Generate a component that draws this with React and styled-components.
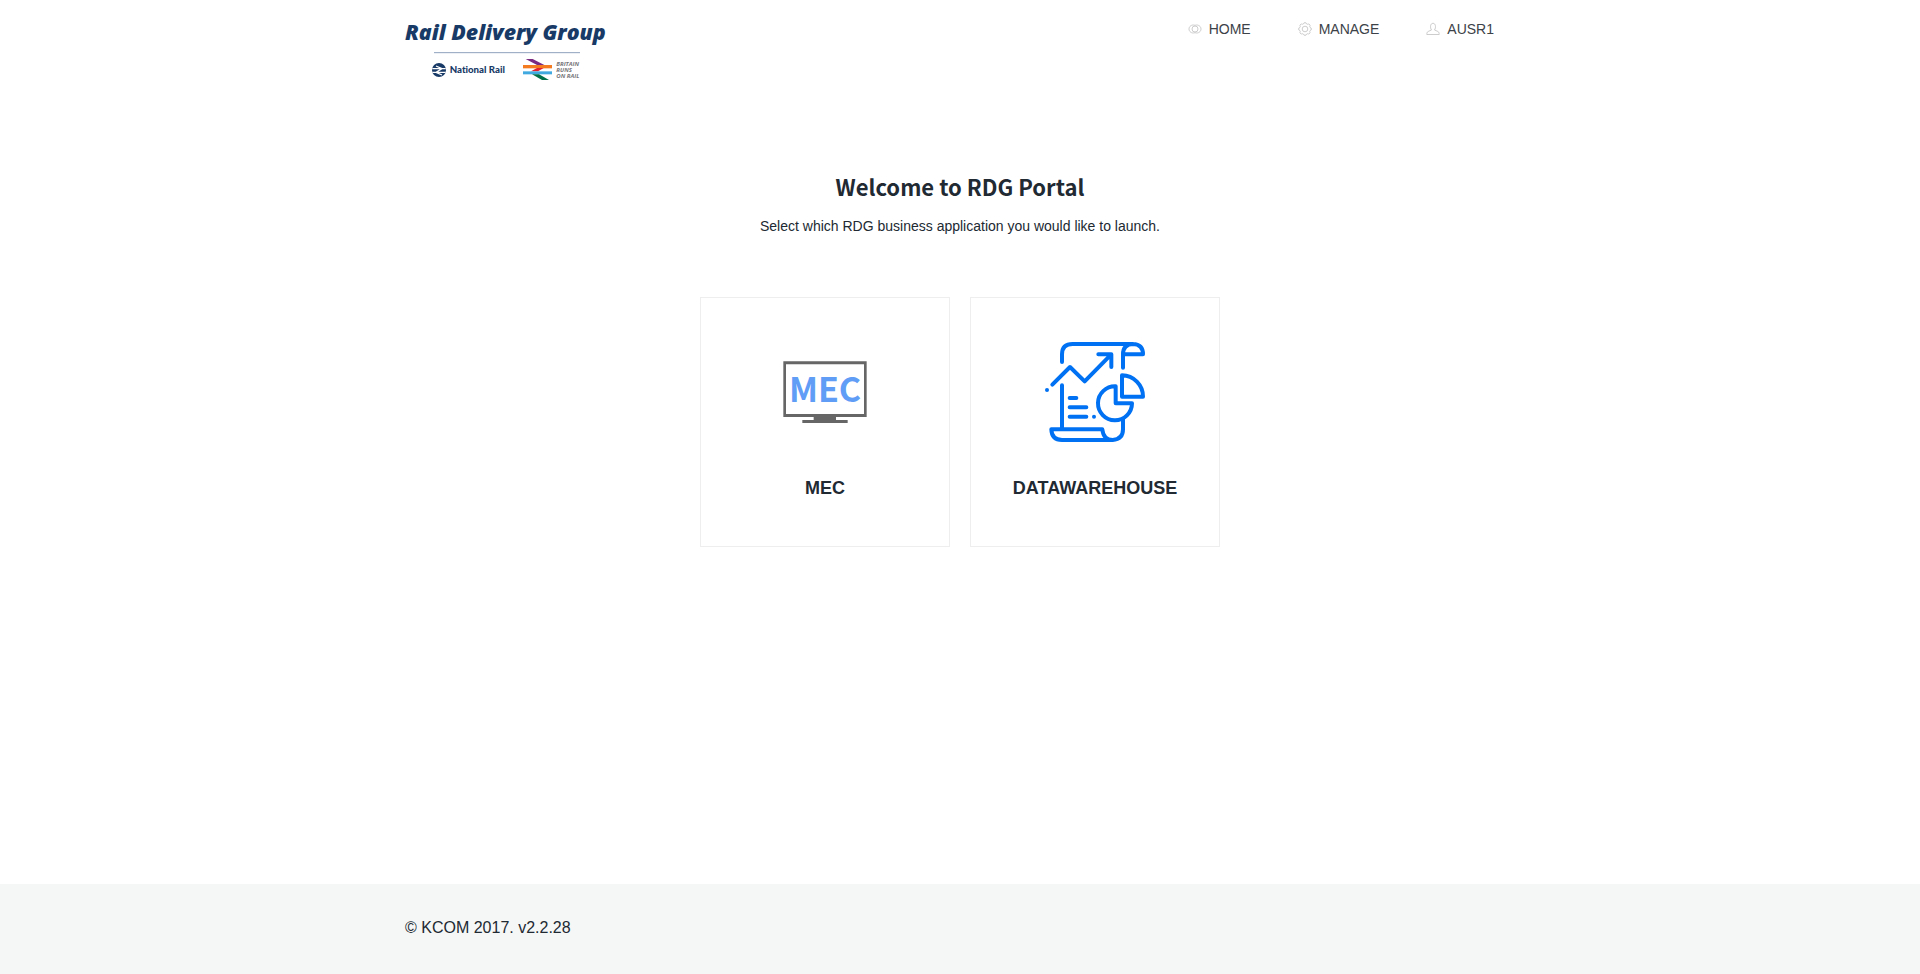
import React from 'react';
import styled, { createGlobalStyle } from 'styled-components';

const GlobalStyle = createGlobalStyle`
  *, *::before, *::after { box-sizing: border-box; }
  body {
    margin: 0;
    background: #fff;
    color: #212932;
    font-family: Arial, "Liberation Sans", sans-serif;
    font-size: 14px;
    line-height: 20px;
  }
`;

const Page = styled.div`
  display: flex;
  flex-direction: column;
  min-height: 100vh;
`;

const Container = styled.div`
  width: 100%;
  max-width: 1140px;
  margin: 0 auto;
  padding: 0 15px;
`;

const HeaderBar = styled(Container).attrs({ as: 'header' })`
  display: flex;
  justify-content: space-between;
  align-items: flex-start;
  padding-top: 19px;
`;

const LogoLink = styled.a`
  display: block;
  height: 64px;
`;

const LogoDrawing = styled.svg`
  display: block;
  overflow: visible;
`;

const NavList = styled.nav`
  display: flex;
  flex-wrap: wrap;
  gap: 47px;
  padding-right: 21px;
`;

const NavLink = styled.a`
  display: flex;
  align-items: center;
  gap: 7px;
  color: #3c4248;
  text-decoration: none;
  text-transform: uppercase;
`;

const NavIcon = styled.svg`
  width: 14px;
  height: 14px;
  fill: none;
  stroke: #c0c0c0;
  stroke-width: 0.8;
`;

const Main = styled.main`
  display: flex;
  flex-direction: column;
  align-items: center;
  flex: 1;
  padding: 87px 15px 40px;
  text-align: center;
`;

const Heading = styled.h1`
  margin: 0;
  font-family: "Noto Sans CJK SC", sans-serif;
  font-size: 22px;
  font-weight: 700;
  line-height: 32px;
`;

const Intro = styled.p`
  margin: 14px 0 0;
`;

const CardList = styled.div`
  display: flex;
  flex-wrap: wrap;
  justify-content: center;
  gap: 20px;
  margin-top: 61px;
`;

const Card = styled.a`
  display: flex;
  flex-direction: column;
  align-items: center;
  width: 250px;
  height: 250px;
  padding-top: 44px;
  border: 1px solid #eee;
  color: inherit;
  text-decoration: none;
`;

const CardIcon = styled.svg`
  width: 100px;
  height: 100px;
`;

const CardTitle = styled.h2`
  margin: 34px 0 0;
  font-size: 18px;
  font-weight: 700;
  line-height: 24px;
`;

const FooterBar = styled.footer`
  padding: 32px 0 34px;
  background: #f5f7f6;
  font-size: 16px;
  line-height: 24px;
`;

const LogoText = styled.text`
  font-family: ${({ $family }) => $family || '"Open Sans"'}, sans-serif;
  font-variant-ligatures: none;
`;

function Logo() {
  return (
    <LogoDrawing width="206" height="64" viewBox="30 27 618 192" role="img" aria-label="Rail Delivery Group">
      <LogoText x="30" y="90" fill="#183a66" fontSize="64" fontWeight="800" fontStyle="italic">
        Rail Delivery Group
      </LogoText>
      <path d="M117 128H555" stroke="#8fa3bd" strokeWidth="3" />
      <circle cx="132" cy="180" r="21" fill="#183a66" />
      <path d="M112 176H152M112 187H152M123 168L141 176L123 187L141 195" fill="none" stroke="#fff" strokeWidth="4" />
      <LogoText $family="Lato" x="164" y="190" fill="#183a66" fontSize="29" fontWeight="900">
        National Rail
      </LogoText>
      <path d="M392 147H413L448 165H426Z" fill="#7a2a80" />
      <path d="M384 165H471V175H384Z" fill="#f47b20" />
      <path d="M426 174H446L429 184H408Z" fill="#e5202e" />
      <path d="M384 184H471V193H384Z" fill="#3fa9e0" />
      <path d="M411 193H432L462 210H441Z" fill="#00704a" />
      <g fill="#77777b" fontSize="18" fontWeight="700" fontStyle="italic">
        <LogoText x="484" y="168">BRITAIN</LogoText>
        <LogoText x="484" y="185">RUNS</LogoText>
        <LogoText x="484" y="203">ON RAIL</LogoText>
      </g>
    </LogoDrawing>
  );
}

function EyeIcon() {
  return (
    <NavIcon viewBox="0 0 14 14" aria-hidden="true">
      <path d="M7 3.300C3.500 2.200 1 4.500 1 7S3.500 11.800 7 10.700C10.500 11.800 13 9.500 13 7S10.500 2.200 7 3.300Z" />
      <circle cx="7" cy="7" r="3" />
    </NavIcon>
  );
}

function GearIcon() {
  return (
    <NavIcon viewBox="0 0 14 14" aria-hidden="true">
      <path d="M5.500 1.800L6 .8H8L8.500 1.800L9.700 2.300L10.800 1.900L12.100 3.200L11.700 4.300L12.200 5.500L13.200 6V8L12.200 8.500L11.700 9.700L12.100 10.800L10.800 12.100L9.700 11.700L8.500 12.200L8 13.200H6L5.500 12.200L4.300 11.700L3.200 12.100L1.900 10.800L2.300 9.700L1.800 8.500L.8 8V6L1.800 5.500L2.300 4.300L1.900 3.200L3.200 1.900L4.300 2.300Z" />
      <circle cx="7" cy="7" r="2.800" />
    </NavIcon>
  );
}

function UserIcon() {
  return (
    <NavIcon viewBox="0 0 14 14" aria-hidden="true">
      <path d="M5.500 8C3.800 5.500 4.300 1.300 7 1.300S10.200 5.500 8.500 8L12 9.500C13 10.100 13.200 11.400 13.200 12.500H.8C.8 11.400 1 10.100 2 9.500Z" />
    </NavIcon>
  );
}

function MonitorIcon() {
  return (
    <CardIcon viewBox="255 171 300 300" aria-hidden="true">
      <path d="M280 229H530V396H438V405H473V414H337V405H371V396H280ZM288 238V387H522V238Z" fill="#666" fillRule="evenodd" />
      <text
        x="405"
        y="350"
        textAnchor="middle"
        fill="#5f9df7"
        fontFamily="'Noto Sans CJK SC', sans-serif"
        fontSize="102"
        fontWeight="700"
      >
        MEC
      </text>
    </CardIcon>
  );
}

function ReportIcon() {
  return (
    <CardIcon viewBox="255 171 300 300" aria-hidden="true">
      <g fill="none" stroke="#0071f2" strokeWidth="12" strokeLinecap="round" strokeLinejoin="round">
        <path d="M306 231V208Q306 177 338 177H519Q549 178 549 208H489M489 248V208Q489 178 519 177" />
        <path d="M277 299L330 246L374 289L453 209M415 208H454V246" />
        <path d="M306 301V433M274 433H427Q430 464 458 465H306Q275 464 274 433ZM458 465Q489 463 489 433V401" />
        <path d="M329 339H349M329 367H379M329 395H379" />
        <path d="M467 304A51 51 0 1 0 516 355H467Z" />
        <path d="M486 271A64 64 0 0 1 549 335H486Z" />
      </g>
      <circle cx="261" cy="315" r="6" fill="#0071f2" />
      <circle cx="402" cy="395" r="6" fill="#0071f2" />
    </CardIcon>
  );
}

const navItems = [
  { label: 'Home', Icon: EyeIcon },
  { label: 'Manage', Icon: GearIcon },
  { label: 'AUSR1', Icon: UserIcon },
];

const applications = [
  { name: 'MEC', Icon: MonitorIcon },
  { name: 'DATAWAREHOUSE', Icon: ReportIcon },
];

export default function App() {
  return (
    <>
      <GlobalStyle />
      <Page>
        <HeaderBar>
          <LogoLink href="#">
            <Logo />
          </LogoLink>
          <NavList aria-label="Main">
            {navItems.map(({ label, Icon }) => (
              <NavLink key={label} href="#">
                <Icon />
                {label}
              </NavLink>
            ))}
          </NavList>
        </HeaderBar>
        <Main>
          <Heading>Welcome to RDG Portal</Heading>
          <Intro>Select which RDG business application you would like to launch.</Intro>
          <CardList>
            {applications.map(({ name, Icon }) => (
              <Card key={name} href="#">
                <Icon />
                <CardTitle>{name}</CardTitle>
              </Card>
            ))}
          </CardList>
        </Main>
        <FooterBar>
          <Container>© KCOM 2017. v2.2.28</Container>
        </FooterBar>
      </Page>
    </>
  );
}
